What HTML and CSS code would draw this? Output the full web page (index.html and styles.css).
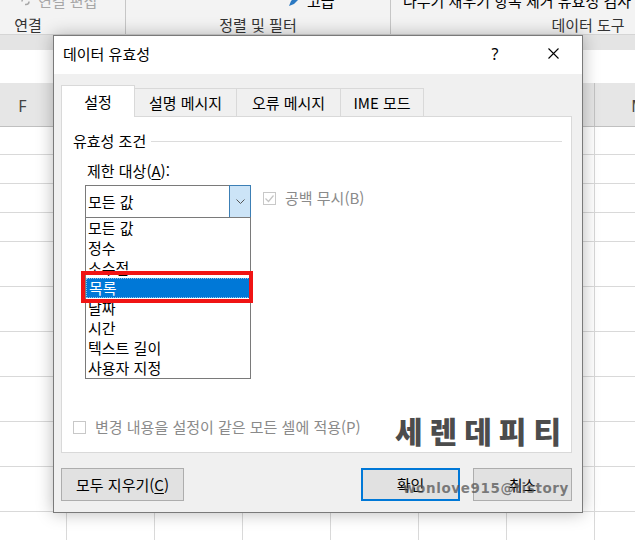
FILE: index.html
```html
<!DOCTYPE html>
<html lang="ko">
<head>
<meta charset="utf-8">
<title>데이터 유효성</title>
<link rel="stylesheet" href="styles.css">
</head>
<body>
<header class="ribbon">
  <div class="ribbon-groups">
    <div class="rgroup g1">
      <div class="rg-top"><div class="rg-top-inner rg-top-g1">
        <svg class="rg-icon" width="11" height="11" viewBox="0 0 11 11"><path d="M2 5.5a3 3 0 0 1 3-3h1M9 5.5a3 3 0 0 1-3 3H5" fill="none" stroke="#a8a8a8" stroke-width="1.5"/></svg>
        <span class="rg-dim">연결 편집</span>
      </div></div>
      <div class="rg-label">연결</div>
    </div>
    <div class="rgroup g2">
      <div class="rg-top"><div class="rg-top-inner rg-top-g2">
        <svg class="rg-icon" width="12" height="12" viewBox="0 0 12 12"><path d="M1 11l2-5 6-6 3 3-6 6z" fill="#2b79c2"/></svg>
        <span>고급</span>
      </div></div>
      <div class="rg-label">정렬 및 필터</div>
    </div>
    <div class="rgroup g3">
      <div class="rg-top"><div class="rg-top-inner rg-top-g3">
        <span>나누기 채우기 항목 제거 유효성 검사</span>
      </div></div>
      <div class="rg-label">데이터 도구</div>
    </div>
  </div>
</header>
<div class="formula-band"></div>
<div class="sheet-gap"></div>
<section class="sheet">
  <div class="col-head">
    <div class="ch">F</div><div class="ch"></div><div class="ch"></div><div class="ch"></div><div class="ch"></div><div class="ch"></div><div class="ch"></div><div class="ch">M</div>
  </div>
  <div class="grow r28"></div>
  <div class="grow r29"></div>
  <div class="grow r29"></div>
  <div class="grow r29"></div>
  <div class="grow r45"></div>
  <div class="grow r45"></div>
  <div class="grow r45"></div>
  <div class="grow r45"></div>
  <div class="grow r45"></div>
  <div class="grow r45"></div>
  <div class="grow r45"></div>
</section>

<div class="dialog">
  <div class="dlg-title">
    <span class="dlg-title-text">데이터 유효성</span>
    <span class="dlg-help">?</span>
    <span class="dlg-close"><svg width="11" height="11" viewBox="0 0 11 11"><path d="M0.5 0.5L10.5 10.5M10.5 0.5L0.5 10.5" stroke="#000" stroke-width="1.1" fill="none"/></svg></span>
  </div>
  <div class="dlg-body">
    <div class="tabs">
      <div class="tab active t1">설정</div>
      <div class="tab t2">설명 메시지</div>
      <div class="tab t3">오류 메시지</div>
      <div class="tab t4">IME 모드</div>
    </div>
    <div class="panel">
      <div class="legend"><span>유효성 조건</span><span class="groove"></span></div>
      <div class="field-label">제한 대상(<u>A</u>):</div>
      <div class="combo-row">
        <div class="combo">
          <span class="combo-value">모든 값</span>
          <span class="combo-btn"><svg width="9" height="5" viewBox="0 0 9 5"><polyline points="0.5,0.5 4.5,4.5 8.5,0.5" fill="none" stroke="#555" stroke-width="1"/></svg></span>
          <ul class="droplist">
            <li>모든 값</li>
            <li>정수</li>
            <li>소수점</li>
            <li class="selected"><span class="focus">목록</span></li>
            <li>날짜</li>
            <li>시간</li>
            <li>텍스트 길이</li>
            <li>사용자 지정</li>
            <span class="annot"></span>
          </ul>
        </div>
        <div class="chk chk-top">
          <span class="box"><svg width="11" height="11" viewBox="0 0 11 11"><polyline points="1.5,5.5 4.5,8.5 9.5,2.5" fill="none" stroke="#c4c4c4" stroke-width="1.2"/></svg></span>
          <span>공백 무시(B)</span>
        </div>
      </div>
      <div class="chk chk-bottom">
        <span class="box"></span>
        <span>변경 내용을 설정이 같은 모든 셀에 적용(P)</span>
      </div>
    </div>
    <div class="buttons">
      <div class="btn btn-clear">모두 지우기(<u>C</u>)</div>
      <div class="btn btn-ok">확인</div>
      <div class="btn btn-cancel">취소</div>
    </div>
  </div>
  <div class="wm-title">세렌데피티</div>
  <div class="wm-mail">wonlove915@tistory</div>
</div>
</body>
</html>
```

FILE: styles.css
```css
* { box-sizing: border-box; }
html, body { margin: 0; padding: 0; }
body {
  width: 635px;
  height: 540px;
  overflow: hidden;
  position: relative;
  background: #fff;
  font-family: "Noto Sans CJK KR", "Noto Sans", sans-serif;
  font-size: 15px;
  color: #000;
}

/* ribbon */
.ribbon {
  height: 35px;
  background: #f3f3f3;
  border-bottom: 1px solid #d5d5d5;
  overflow: hidden;
}
.ribbon-groups { display: flex; margin-left: -69px; }
.rgroup {
  flex: none;
  height: 34px;
  display: flex;
  flex-direction: column;
  border-right: 1px solid #c6c6c6;
}
.g1 { width: 195px; }
.g2 { width: 265px; }
.g3 { width: 394px; border-right: none; }
.rg-top { height: 9px; overflow: hidden; }
.rg-top-inner {
  margin-top: -8px;
  display: flex;
  align-items: center;
  gap: 7px;
  line-height: 18px;
  white-space: nowrap;
}
.rg-top-g1 { padding-left: 89px; }
.rg-top-g2 { padding-left: 162px; }
.rg-top-g3 { padding-left: 12px; }
.rg-dim { color: #a6a6a6; }
.rg-label {
  margin-top: auto;
  text-align: center;
  line-height: 18px;
  color: #333;
}

.formula-band { height: 15px; background: #e4e4e4; }
.sheet-gap { height: 33px; }

/* sheet */
.col-head {
  display: flex;
  height: 44px;
  margin-left: -21px;
  background: #e6e6e6;
  border-bottom: 1px solid #c0c0c0;
}
.ch {
  flex: none;
  width: 88px;
  border-right: 1px solid #c4c4c4;
  display: flex;
  align-items: center;
  justify-content: center;
  padding-top: 3px;
  font-family: "Noto Sans", sans-serif;
  font-size: 16px;
  color: #444;
}
.grow {
  border-bottom: 1px solid #d9d9d9;
  background-image: linear-gradient(to right, transparent 87px, #d9d9d9 87px);
  background-size: 88px 100%;
  background-position: -21px 0;
}
.r28 { height: 28px; }
.r29 { height: 29px; }
.r45 { height: 45px; }

/* dialog */
.dialog {
  position: absolute;
  left: 53px;
  top: 35px;
  width: 530px;
  height: 478px;
  border: 1px solid #7a7a7a;
  background: #f0f0f0;
  box-shadow: 0 0 16px rgba(0, 0, 0, 0.28);
  display: flex;
  flex-direction: column;
}
.dlg-title {
  flex: none;
  height: 38px;
  background: #fff;
  display: flex;
  align-items: center;
  padding: 0 6px 3px 9px;
  line-height: 20px;
}
.dlg-help {
  margin-left: auto;
  width: 16px;
  text-align: center;
  font-family: "Noto Sans", sans-serif;
  font-size: 16px;
}
.dlg-close {
  width: 46px;
  margin-left: 27px;
  display: flex;
  justify-content: center;
  align-items: center;
  height: 20px;
}
.dlg-body {
  flex: 1;
  display: flex;
  flex-direction: column;
  padding: 11px 10px 11px 7px;
}

.tabs {
  flex: none;
  display: flex;
  align-items: flex-end;
  height: 31px;
  position: relative;
  z-index: 1;
}
.tab {
  flex: none;
  height: 28px;
  margin-left: -1px;
  border: 1px solid #d9d9d9;
  border-bottom: none;
  background: #f0f0f0;
  display: flex;
  align-items: center;
  justify-content: center;
  line-height: 20px;
}
.tab.active {
  height: 32px;
  margin-left: 0;
  margin-bottom: -1px;
  background: #fff;
}
.t1 { width: 74px; }
.t2 { width: 103px; }
.t3 { width: 105px; }
.t4 { width: 84px; }

.panel {
  flex: none;
  height: 337px;
  background: #fff;
  border: 1px solid #d9d9d9;
  display: flex;
  flex-direction: column;
  padding: 0 9px 15px 11px;
}
.legend {
  margin-top: 14px;
  display: flex;
  align-items: center;
  line-height: 20px;
}
.groove { flex: 1; height: 1px; margin-left: 5px; background: #dcdcdc; }
.field-label { margin-top: 10px; padding-left: 14px; line-height: 20px; }
.field-label u, .btn u { text-underline-offset: 2px; }

.combo-row {
  margin-top: 4px;
  padding-left: 12px;
  display: flex;
  align-items: flex-start;
}
.combo {
  flex: none;
  position: relative;
  width: 166px;
  height: 33px;
  border: 1px solid #7a7a7a;
  background: #fff;
  display: flex;
  align-items: center;
  padding-left: 2px;
  line-height: 20px;
}
.combo-btn {
  margin: -1px -1px -1px auto;
  align-self: stretch;
  width: 22px;
  border: 1px solid #3c7fb5;
  background: #cce4f7;
  display: flex;
  align-items: center;
  justify-content: center;
}
.droplist {
  position: absolute;
  left: -1px;
  top: 31px;
  width: 166px;
  height: 162px;
  margin: 0;
  padding: 0;
  list-style: none;
  border: 1px solid #7a7a7a;
  background: #fff;
  z-index: 2;
}
.droplist li {
  height: 20px;
  line-height: 20px;
  padding-left: 2px;
  white-space: nowrap;
}
.droplist li.selected { background: #0078d7; color: #fff; padding-left: 0; }
.focus {
  display: block;
  height: 20px;
  padding-left: 2px;
  border: 1px dotted rgba(255, 255, 255, 0.55);
  line-height: 18px;
}
.annot {
  position: absolute;
  left: -5px;
  top: 53px;
  width: 172px;
  height: 32px;
  border: 4px solid #f01414;
}

.chk {
  display: flex;
  align-items: center;
  line-height: 20px;
  color: #8a8a8a;
}
.box {
  flex: none;
  width: 13px;
  height: 13px;
  border: 1px solid #c8c8c8;
  background: #fff;
  margin-right: 9px;
  display: flex;
  align-items: center;
  justify-content: center;
}
.chk-top { margin-left: 12px; margin-top: 3px; }
.chk-bottom { margin-top: auto; }

.buttons {
  flex: none;
  margin-top: 15px;
  display: flex;
  height: 33px;
}
.btn {
  flex: none;
  height: 33px;
  border: 1px solid #adadad;
  background: #e1e1e1;
  display: flex;
  align-items: center;
  justify-content: center;
  line-height: 20px;
}
.btn-clear { width: 123px; }
.btn-ok { width: 99px; margin-left: auto; border: 2px solid #0078d7; }
.btn-cancel { width: 99px; margin-left: 13px; }

/* watermarks */
.wm-title {
  position: absolute;
  left: 341px;
  top: 379px;
  font-size: 30px;
  line-height: 30px;
  font-weight: 900;
  letter-spacing: 7px;
  color: #4c4c4c;
  white-space: nowrap;
}
.wm-mail {
  position: absolute;
  left: 349px;
  top: 444px;
  font-family: "DejaVu Sans", sans-serif;
  font-weight: bold;
  font-size: 13.5px;
  line-height: 16px;
  letter-spacing: 0.6px;
  color: rgba(80, 80, 80, 0.72);
  white-space: nowrap;
}
```
